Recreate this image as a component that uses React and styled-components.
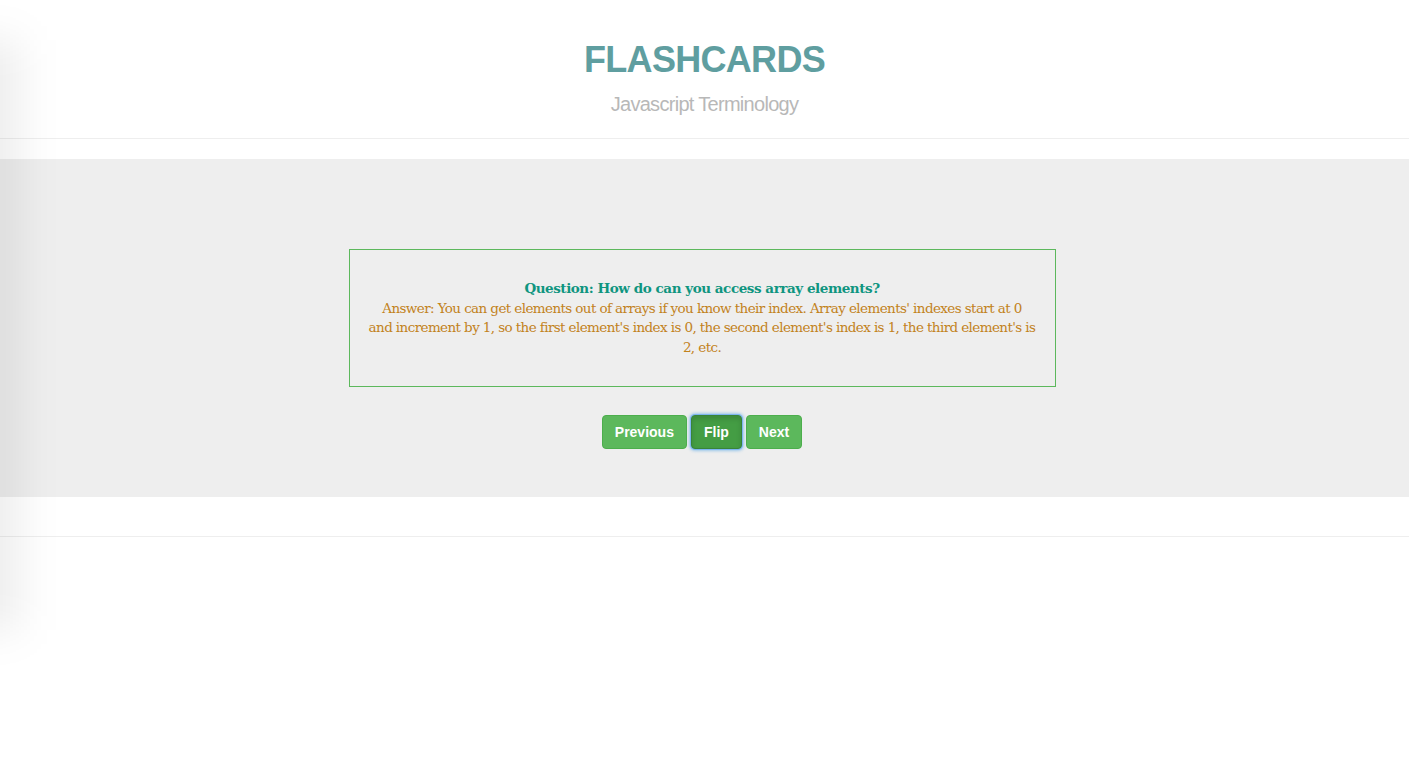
import { createGlobalStyle, styled } from "styled-components";

const GlobalStyle = createGlobalStyle`
  html, body {
    margin: 0;
    padding: 0;
    background: #ffffff;
    font-family: "Liberation Sans", Arial, sans-serif;
  }
`;

const Page = styled.div`
  position: relative;
  min-height: 774px;
  overflow: hidden;
`;

const EdgeShadow = styled.div`
  position: absolute;
  left: -55px;
  top: 40px;
  width: 75px;
  height: 590px;
  background: rgba(0, 0, 0, 0.07);
  filter: blur(20px);
  pointer-events: none;
`;

const Header = styled.header`
  display: flex;
  flex-direction: column;
  align-items: center;
  padding-top: 40px;
  height: 98px;
`;

const Title = styled.h1`
  margin: 0;
  font-size: 36px;
  line-height: 40px;
  font-weight: 700;
  color: #5f9ea0;
  letter-spacing: -0.7px;
`;

const Subtitle = styled.p`
  margin: 12px 0 0;
  font-size: 20px;
  line-height: 24px;
  font-weight: 300;
  color: #b8b8b8;
  letter-spacing: -0.7px;
`;

const Rule = styled.hr`
  margin: 0;
  border: 0;
  border-top: 1px solid #eeeeee;
`;

const Jumbotron = styled.section`
  margin-top: 20px;
  background: #eeeeee;
  height: 338px;
  box-sizing: border-box;
  padding-top: 90px;
  display: flex;
  flex-direction: column;
  align-items: center;
`;

const Card = styled.div`
  width: 707px;
  height: 138px;
  box-sizing: border-box;
  border: 1px solid #5cb85c;
  padding: 29px 14px 0;
  margin-right: 5px;
  text-align: center;
  font-family: "DejaVu Serif", Georgia, serif;
  font-size: 13.5px;
  line-height: 19.5px;
  letter-spacing: -0.6px;
`;

const Question = styled.div`
  font-weight: 700;
  color: #0f9580;
  letter-spacing: -0.45px;
`;

const Answer = styled.div`
  color: #c2821c;
`;

const Controls = styled.div`
  display: flex;
  gap: 4px;
  margin-top: 28px;
  margin-right: 5px;
`;

const Button = styled.button`
  font-family: "Liberation Sans", Arial, sans-serif;
  font-size: 14px;
  font-weight: 700;
  line-height: 20px;
  padding: 6px 12px;
  height: 34px;
  color: #ffffff;
  border-radius: 4px;
  border: 1px solid ${(p) => (p.$active ? "#398439" : "#4cae4c")};
  background: ${(p) => (p.$active ? "#449d44" : "#5cb85c")};
  box-shadow: ${(p) =>
    p.$active
      ? "0 0 0 1px #7fb6f0, 0 0 3px 2px rgba(102, 175, 233, 0.6), inset 0 3px 5px rgba(0,0,0,0.125)"
      : "none"};
  cursor: pointer;
`;

export default function App() {
  return (
    <Page>
      <GlobalStyle />
      <EdgeShadow />
      <Header>
        <Title>FLASHCARDS</Title>
        <Subtitle>Javascript Terminology</Subtitle>
      </Header>
      <Rule />
      <Jumbotron>
        <Card>
          <Question>Question: How do can you access array elements?</Question>
          <Answer>
            Answer: You can get elements out of arrays if you know their index.
            Array elements' indexes start at 0<br />
            and increment by 1, so the first element's index is 0, the second
            element's index is 1, the third element's is 2, etc.
          </Answer>
        </Card>
        <Controls>
          <Button>Previous</Button>
          <Button $active>Flip</Button>
          <Button>Next</Button>
        </Controls>
      </Jumbotron>
      <Rule style={{ marginTop: 39 }} />
    </Page>
  );
}
